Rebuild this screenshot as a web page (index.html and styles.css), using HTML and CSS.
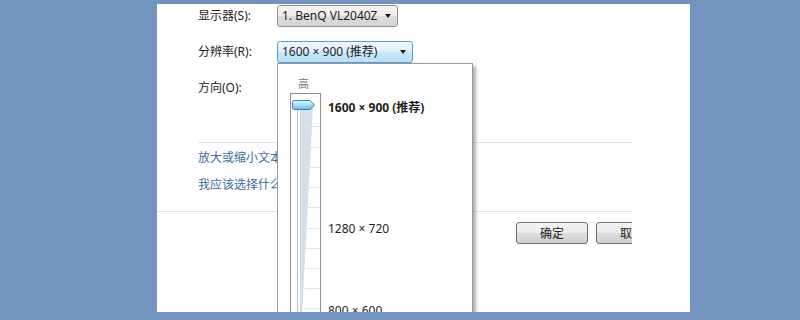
FILE: index.html
```html
<!DOCTYPE html>
<html>
  <head>
    <meta charset="utf-8">
    <title>屏幕分辨率</title>
    <link rel="stylesheet" href="styles.css">
  </head>
  <body>
    <div class="window">
      <div class="content">
        <div class="settings">
          <div class="row">
            <span class="label">显示器(S):</span>
            <div class="select">1. BenQ VL2040Z<i class="arrow"></i></div>
          </div>
          <div class="row">
            <span class="label">分辨率(R):</span>
            <div class="select select-open">1600 × 900 (推荐)<i class="arrow"></i></div>
          </div>
          <div class="row">
            <span class="label">方向(O):</span>
          </div>
        </div>

        <div class="links">
          <a href="#">放大或缩小文本和其他项目</a>
          <a href="#">我应该选择什么显示器设置?</a>
        </div>

        <div class="actions">
          <button class="btn">确定</button>
          <button class="btn">取消</button>
          <button class="btn">应用(A)</button>
        </div>

        <div class="dropdown">
          <span class="high">高</span>
          <svg class="slider" width="36" height="230" viewBox="0 0 36 230">
            <defs>
              <linearGradient id="thumbFill" x1="0" y1="0" x2="0" y2="1">
                <stop offset="0" stop-color="#e2f5fc"/>
                <stop offset="0.5" stop-color="#a9def3"/>
                <stop offset="1" stop-color="#62bde2"/>
              </linearGradient>
            </defs>
            <rect x="2.5" y="0.5" width="30" height="260" fill="none" stroke="#222" stroke-width="1" stroke-dasharray="1,1"/>
            <polygon points="12,13 25,13 14,222 12,222" fill="#d3dfea"/>
            <line x1="9.5" y1="14" x2="9.5" y2="222" stroke="#b9c3ca" stroke-width="1"/>
            <g stroke="#dfe5ea" stroke-width="1">
              <line x1="17" y1="33.5" x2="32" y2="33.5"/>
              <line x1="17" y1="54.5" x2="32" y2="54.5"/>
              <line x1="17" y1="74.5" x2="32" y2="74.5"/>
              <line x1="17" y1="94.5" x2="32" y2="94.5"/>
              <line x1="17" y1="114.5" x2="32" y2="114.5"/>
              <line x1="17" y1="135.5" x2="32" y2="135.5"/>
              <line x1="17" y1="155.5" x2="32" y2="155.5"/>
              <line x1="17" y1="175.5" x2="32" y2="175.5"/>
              <line x1="17" y1="195.5" x2="32" y2="195.5"/>
              <line x1="17" y1="215.5" x2="32" y2="215.5"/>
            </g>
            <path d="M6.5,7.5 H22 L26.5,12 L22,16.5 H6.5 Q4.5,16.5 4.5,14.5 V9.5 Q4.5,7.5 6.5,7.5 Z" fill="url(#thumbFill)" stroke="#3b7fae" stroke-width="1"/>
          </svg>
          <span class="option option-current" style="top: 36px">1600 × 900 (推荐)</span>
          <span class="option" style="top: 157px">1280 × 720</span>
          <span class="option" style="top: 239px">800 × 600</span>
        </div>
      </div>
    </div>
  </body>
</html>
```

FILE: styles.css
```css
body {
  margin: 0;
  background-color: #7193be;
  font-family: 'Noto Sans', 'Noto Sans CJK SC', sans-serif;
  font-size: 12px;
  color: #1e1e1e;
}
.window {
  margin: 4px 0 0 157px;
  width: 533px;
  height: 308px;
  background-color: #fff;
  overflow: hidden;
}
.content {
  position: relative;
  width: 475px;
  height: 308px;
  overflow: hidden;
}
.settings {
  padding: 1px 0 0 41px;
  display: flex;
  flex-direction: column;
  gap: 14px;
}
.row {
  display: flex;
  align-items: center;
  height: 22px;
}
.label {
  width: 79px;
  line-height: 16px;
}
.select {
  position: relative;
  box-sizing: border-box;
  height: 22px;
  width: 121px;
  padding: 0 0 0 4px;
  line-height: 20px;
  border: 1px solid #8e8f8f;
  border-radius: 3px;
  background: linear-gradient(#f4f4f4, #ebebeb 50%, #dddddd 51%, #d4d4d4);
  white-space: nowrap;
}
.select-open {
  width: 136px;
  border-color: #5b9ccb;
  background: linear-gradient(#edf7fd, #def0fb 50%, #c8e7f9 51%, #b9dff7);
}
.arrow {
  position: absolute;
  right: 6px;
  top: 8px;
  width: 0;
  height: 0;
  border-left: 3.5px solid transparent;
  border-right: 3.5px solid transparent;
  border-top: 4px solid #1a1a1a;
}
.links {
  margin: 43px 0 0 41px;
  border-top: 1px solid #e3e3e3;
  padding: 7px 0 18px;
  display: flex;
  flex-direction: column;
  gap: 11px;
}
.links a {
  color: #3d6d9b;
  text-decoration: none;
  line-height: 16px;
  white-space: nowrap;
}
.actions {
  border-top: 1px solid #e3e3e3;
  padding: 10px 0 0 359px;
  display: flex;
  gap: 8px;
}
.btn {
  flex: none;
  box-sizing: border-box;
  width: 72px;
  height: 22px;
  padding: 0;
  font-family: inherit;
  font-size: 12px;
  color: #1e1e1e;
  border: 1px solid #707070;
  border-radius: 3px;
  background: linear-gradient(#f2f2f2, #ebebeb 50%, #dddddd 51%, #cfcfcf);
}
.dropdown {
  position: absolute;
  left: 120px;
  top: 59px;
  width: 196px;
  height: 270px;
  box-sizing: border-box;
  border: 1px solid #989898;
  background-color: #fff;
  box-shadow: 3px 3px 3px rgba(0, 0, 0, 0.3);
}
.high {
  position: absolute;
  left: 20px;
  top: 11px;
  font-size: 11px;
  color: #7a7a7a;
}
.slider {
  position: absolute;
  left: 10px;
  top: 29px;
}
.option {
  position: absolute;
  left: 50px;
  line-height: 16px;
  white-space: nowrap;
}
.option-current {
  font-weight: bold;
}
```
